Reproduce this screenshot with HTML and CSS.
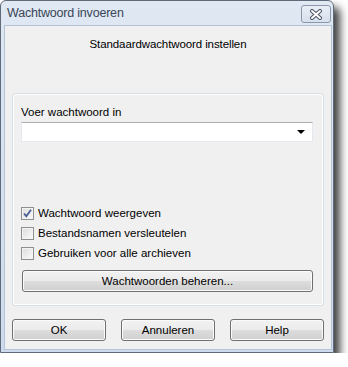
FILE: index.html
```html
<!DOCTYPE html>
<html lang="nl">
<head>
    <meta charset="UTF-8">
    <title>Wachtwoord invoeren</title>
    <link rel="stylesheet" href="styles.css">
</head>
<body>
    <div class="window">
        <div class="titlebar">
            <span class="title">Wachtwoord invoeren</span>
            <button class="close" aria-label="Sluiten">
                <svg width="14" height="11" viewBox="0 0 14 11">
                    <path d="M3 2 L11 9 M11 2 L3 9" stroke="#4b5563" stroke-width="4" stroke-linecap="round"/>
                    <path d="M3 2 L11 9 M11 2 L3 9" stroke="#fff" stroke-width="2" stroke-linecap="round"/>
                </svg>
            </button>
        </div>

        <div class="client">
            <div class="heading">Standaardwachtwoord instellen</div>

            <div class="group">
                <div class="label">Voer wachtwoord in</div>
                <div class="combo">
                    <span class="arrow"></span>
                </div>

                <div class="options">
                    <label class="check">
                        <span class="box checked">
                            <svg width="11" height="11" viewBox="0 0 11 11">
                                <path d="M2 5.5 L4.3 8.2 L9 1.8" fill="none" stroke="#4a5f97" stroke-width="1.8"/>
                            </svg>
                        </span>
                        Wachtwoord weergeven
                    </label>
                    <label class="check"><span class="box"></span>Bestandsnamen versleutelen</label>
                    <label class="check"><span class="box"></span>Gebruiken voor alle archieven</label>
                </div>

                <button class="btn wide">Wachtwoorden beheren...</button>
            </div>

            <div class="actions">
                <button class="btn">OK</button>
                <button class="btn">Annuleren</button>
                <button class="btn">Help</button>
            </div>
        </div>
    </div>
</body>
</html>
```

FILE: styles.css
```css
body {
    margin: 0;
    background: #fff;
    font-family: "Liberation Sans", Arial, sans-serif;
    font-size: 11.5px;
    color: #000;
}
.window {
    width: 334px;
    height: 353px;
    box-sizing: border-box;
    border: 1px solid #5f6b7a;
    border-radius: 6px 6px 0 0;
    background: linear-gradient(#dfe8f3, #cddbec);
    box-shadow: 6px 7px 8px rgba(0, 0, 0, 0.75);
    display: flex;
    flex-direction: column;
}
.titlebar {
    height: 24px;
    display: flex;
    align-items: center;
    justify-content: space-between;
    padding: 0 2px 0 6px;
}
.title {
    font-size: 12.5px;
    letter-spacing: -0.2px;
    color: #3a4656;
}
.close {
    width: 30px;
    height: 18px;
    margin-top: 2px;
    border: 1px solid #8b98aa;
    border-radius: 3px;
    background: linear-gradient(#e9eef5, #d6e0ec);
    padding: 0;
    display: flex;
    align-items: center;
    justify-content: center;
}
.client {
    flex: 1;
    margin: 0 1px 2px 3px;
    background: #f0f0f0;
    border: 1px solid #b4c3d6;
    display: flex;
    flex-direction: column;
    padding: 0 7px 0 7px;
}
.heading {
    text-align: center;
    padding-top: 12px;
    height: 55px;
    letter-spacing: -0.1px;
}
.group {
    border: 1px solid #d5dfe5;
    box-shadow: inset 0 0 0 1px #fff;
    border-radius: 3px;
    height: 213px;
    box-sizing: border-box;
    padding: 10px 10px 0 8px;
    display: flex;
    flex-direction: column;
}
.label {
    height: 18px;
    line-height: 17px;
}
.combo {
    position: relative;
    height: 20px;
    box-sizing: border-box;
    background: #fff;
    border: 1px solid #e3e9ef;
    border-top-color: #abadb3;
}
.arrow {
    position: absolute;
    right: 7px;
    top: 7px;
    border-left: 4px solid transparent;
    border-right: 4px solid transparent;
    border-top: 4px solid #000;
}
.options {
    margin-top: 61px;
    display: flex;
    flex-direction: column;
}
.check {
    height: 20px;
    display: flex;
    align-items: center;
    gap: 4px;
}
.box {
    width: 13px;
    height: 13px;
    box-sizing: border-box;
    border: 1px solid #8e8f8f;
    background: linear-gradient(135deg, #dcdcdc, #fbfbfb);
    box-shadow: inset 0 0 0 1px #f4f4f4;
    display: flex;
    align-items: center;
    justify-content: center;
}
.btn {
    font-family: inherit;
    font-size: 11.5px;
    color: #000;
    height: 22px;
    border: 1px solid #707070;
    border-radius: 3px;
    background: linear-gradient(#f2f2f2 0%, #ebebeb 50%, #dddddd 51%, #cfcfcf 100%);
    box-shadow: inset 0 0 0 1px #fbfbfb;
    padding: 0;
}
.wide {
    margin-top: 7px;
    margin-left: 1px;
}
.actions {
    margin-top: 13px;
    display: flex;
    justify-content: space-between;
}
.actions .btn {
    width: 94px;
    height: 22px;
}
```
